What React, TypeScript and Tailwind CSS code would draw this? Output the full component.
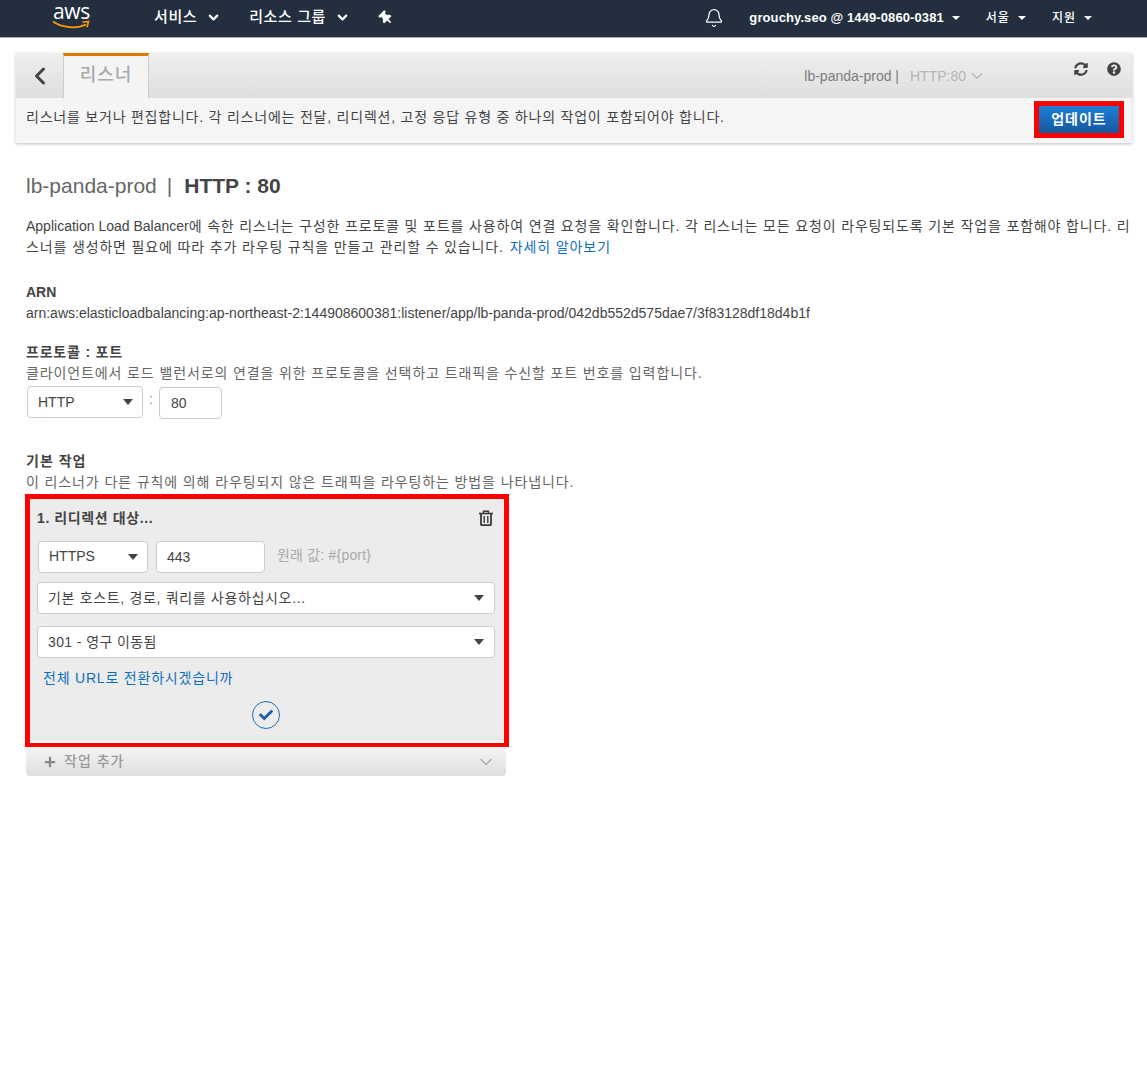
import { Bell, ChevronDown, ChevronLeft } from "lucide-react";
import { FaCheck, FaPlus, FaQuestionCircle, FaSyncAlt, FaThumbtack } from "react-icons/fa";

const font = "font-['Liberation_Sans','Noto_Sans_CJK_KR',sans-serif]";

function Caret({ className = "" }: { className?: string }) {
    return <span className={"w-0 h-0 border-x-[5.5px] border-x-transparent border-t-[6px] border-t-[#444] " + className} />;
}

function NavCaret() {
    return <span className="ml-[8px] w-0 h-0 border-x-[4px] border-x-transparent border-t-[4px] border-t-white" />;
}

function TrashIcon() {
    return (
        <svg className="mr-[4px]" width="14" height="16" viewBox="0 0 14 16" fill="none" stroke="#3a3a3a">
            <path d="M0 3.5H14" strokeWidth="1.6" />
            <path d="M4.5 3V1.2H9.5V3" strokeWidth="1.4" />
            <path d="M2 3.5V14.2C2 14.8 2.4 15.2 3 15.2H11C11.6 15.2 12 14.8 12 14.2V3.5" strokeWidth="1.8" />
            <path d="M5.2 6V13M8.8 6V13" strokeWidth="1.4" />
        </svg>
    );
}

function Field({ children, className = "" }: { children: React.ReactNode; className?: string }) {
    return (
        <div className={"flex items-center justify-between rounded-[4px] border border-[#ccc] bg-white text-[14px] text-[#444] " + className}>
            {children}
        </div>
    );
}

function TopNav() {
    return (
        <div className="flex h-[38px] items-center border-b border-[#aab0b8] bg-[#232f3e] pb-[2px] text-white">
            <div className="relative ml-[52px] h-[36px] w-[40px] shrink-0">
                <div className="absolute left-[1px] top-0 font-['Open_Sans',sans-serif] text-[21px] leading-[22px] tracking-[-0.3px]">aws</div>
                <svg className="absolute left-0 top-[20px]" width="38" height="10" viewBox="0 0 38 10" fill="none">
                    <path d="M1 1.5C10 8 25 9 34 4.5" stroke="#f90" strokeWidth="1.8" />
                    <path d="M30.5 2.2L36.5 1.5L35 7.2" stroke="#f90" strokeWidth="1.6" />
                </svg>
            </div>
            <div className="ml-[62px] flex items-center text-[15px] font-medium tracking-[0.6px]">
                서비스
                <ChevronDown className="ml-[9px] size-[15px]" strokeWidth={3.5} />
            </div>
            <div className="ml-[28px] flex items-center text-[15px] font-medium tracking-[0.6px]">
                리소스 그룹
                <ChevronDown className="ml-[9px] size-[15px]" strokeWidth={3.5} />
            </div>
            <FaThumbtack className="ml-[29px] size-[14px] -rotate-45" />
            <Bell className="ml-auto size-[20px]" strokeWidth={1.5} />
            <div className="ml-[25px] flex items-center text-[13px] font-bold tracking-[0.1px]">
                grouchy.seo @ 1449-0860-0381
                <NavCaret />
            </div>
            <div className="ml-[26px] flex items-center text-[12px] font-medium tracking-[1px]">
                서울
                <NavCaret />
            </div>
            <div className="ml-[26px] mr-[55px] flex items-center text-[12px] font-medium tracking-[1px]">
                지원
                <NavCaret />
            </div>
        </div>
    );
}

function Header() {
    return (
        <div className="ml-[16px] mr-[15px] mt-[15px] shadow-[0_1px_3px_rgba(0,0,0,0.25)]">
            <div className="flex h-[45px] bg-gradient-to-b from-[#efefef] to-[#dedede]">
                <div className="flex w-[47px] items-center justify-center pl-[1px] pt-[1px]">
                    <ChevronLeft className="size-[28px] text-[#444]" strokeWidth={2.6} />
                </div>
                <div className="h-[45px] w-[86px] border-x border-x-[#ccc] border-t-[3px] border-t-[#dd7a00] bg-[#f4f4f4] pt-[6px] text-center text-[18px] font-medium tracking-[1px] text-[#aaa]">
                    리스너
                </div>
                <div className="ml-auto flex items-center pt-[1px] text-[14px]">
                    <span className="text-[#7d7d7d]">lb-panda-prod |</span>
                    <span className="ml-[11px] text-[#b4b4b4]">HTTP:80</span>
                    <ChevronDown className="ml-[2px] size-[18px] text-[#b4b4b4]" strokeWidth={1.6} />
                </div>
                <div className="ml-[88px] mr-[11px] flex items-start gap-[19px] pt-[9px] text-[#444]">
                    <FaSyncAlt className="size-[14px]" />
                    <FaQuestionCircle className="size-[14px]" />
                </div>
            </div>
            <div className="flex h-[45px] items-start justify-between bg-[#f5f5f5] pl-[10px] pr-[8px] text-[14px] text-[#444]">
                <span className="mt-[9px] tracking-[0.78px]">리스너를 보거나 편집합니다. 각 리스너에는 전달, 리디렉션, 고정 응답 유형 중 하나의 작업이 포함되어야 합니다.</span>
                <div className="mt-[3px] border-[5px] border-[#ff0000]">
                    <button type="button" className="block h-[27px] w-[80px] bg-gradient-to-b from-[#1f7fd6] to-[#15589e] text-[14px] font-bold tracking-[1px] text-white">
                        업데이트
                    </button>
                </div>
            </div>
        </div>
    );
}

function RedirectCard() {
    return (
        <div className="mt-px w-[484px] border-[5px] border-b-[4px] border-[#ff0000] -ml-px">
            <div className="h-[244px] border-b-2 border-white bg-[#ececec] px-[7px]">
                <div className="flex items-center justify-between pt-[9px]">
                    <span className="text-[14px] font-bold leading-[20px] tracking-[0.6px] text-[#444]">1. 리디렉션 대상...</span>
                    <TrashIcon />
                </div>
                <div className="mt-[12px] flex items-center pl-px">
                    <Field className="h-[32px] w-[110px] pl-[10px] pr-[9px]">
                        HTTPS
                        <Caret />
                    </Field>
                    <Field className="ml-[8px] mt-[1px] h-[32px] w-[109px] pl-[10px]">443</Field>
                    <span className="ml-[12px] -mt-[3px] text-[14px] tracking-[0.2px] text-[#aaa]">원래 값: #{"{"}port{"}"}</span>
                </div>
                <Field className="mt-[9px] h-[32px] w-[458px] pl-[10px] pr-[10px]">
                    <span className="tracking-[0.67px]">기본 호스트, 경로, 쿼리를 사용하십시오...</span>
                    <Caret />
                </Field>
                <Field className="mt-[12px] h-[32px] w-[458px] pl-[10px] pr-[10px]">
                    <span className="tracking-[0.4px]">301 - 영구 이동됨</span>
                    <Caret />
                </Field>
                <a className="mt-[10px] block pl-[6px] text-[14px] leading-[21px] tracking-[0.8px] text-[#0f6ebf]">전체 URL로 전환하시겠습니까</a>
                <div className="mt-[12px] flex justify-center pr-[2px]">
                    <div className="flex size-[28px] items-center justify-center rounded-full border border-[#1b6cb5]">
                        <FaCheck className="size-[14px] text-[#1b5fa8]" />
                    </div>
                </div>
            </div>
        </div>
    );
}

export default function App() {
    return (
        <div className={"h-[1074px] w-[1147px] overflow-hidden bg-white " + font}>
            <TopNav />
            <Header />
            <div className="px-[26px] text-[14px] leading-[21px] text-[#444]">
                <h1 className="mt-[29px] text-[21px] leading-[28px]">
                    <span className="text-[#666]">lb-panda-prod</span>
                    <span className="ml-[10px] mr-[12px] text-[#666]">|</span>
                    <span className="font-bold">HTTP : 80</span>
                </h1>
                <p className="mt-[16px] w-[1106px]">
                    Application Load Balancer<span className="tracking-[0.85px]">에 속한 리스너는 구성한 프로토콜 및 포트를 사용하여 연결 요청을 확인합니다. 각 리스너는 모든 요청이 라우팅되도록 기본 작업을 포함해야 합니다. 리스너를 생성하면 필요에 따라 추가 라우팅 규칙을 만들고 관리할 수 있습니다.</span> <a className="ml-[2px] tracking-[0.9px] text-[#0f6ebf]">자세히 알아보기</a>
                </p>
                <div className="mt-[24px] font-bold">ARN</div>
                <div>arn:aws:elasticloadbalancing:ap-northeast-2:144908600381:listener/app/lb-panda-prod/042db552d575dae7/3f83128df18d4b1f</div>
                <div className="mt-[18px] font-bold tracking-[0.8px]">프로토콜 : 포트</div>
                <div className="tracking-[0.88px] text-[#666]">클라이언트에서 로드 밸런서로의 연결을 위한 프로토콜을 선택하고 트래픽을 수신할 포트 번호를 입력합니다.</div>
                <div className="mt-[2px] flex items-start pl-px">
                    <Field className="h-[32px] w-[116px] pl-[10px] pr-[9px]">
                        HTTP
                        <Caret />
                    </Field>
                    <span className="ml-[6px] w-[10px] leading-[26px] text-[#888]">:</span>
                    <Field className="mt-[1px] h-[32px] w-[63px] pl-[11px]">80</Field>
                </div>
                <div className="mt-[32px] font-bold tracking-[1px]">기본 작업</div>
                <div className="tracking-[0.89px] text-[#666]">이 리스너가 다른 규칙에 의해 라우팅되지 않은 트래픽을 라우팅하는 방법을 나타냅니다.</div>
                <RedirectCard />
                <div className="flex h-[29px] w-[480px] items-center justify-between rounded-b-[4px] bg-gradient-to-b from-[#f5f5f5] to-[#dedede] pl-[18px] pr-[10px] text-[14px] font-medium tracking-[1px] text-[#999]">
                    <span className="flex items-center gap-[8px]">
                        <FaPlus className="size-[12px] text-[#888]" />
                        작업 추가
                    </span>
                    <ChevronDown className="size-[20px] text-[#aaa]" strokeWidth={1.6} />
                </div>
            </div>
        </div>
    );
}
